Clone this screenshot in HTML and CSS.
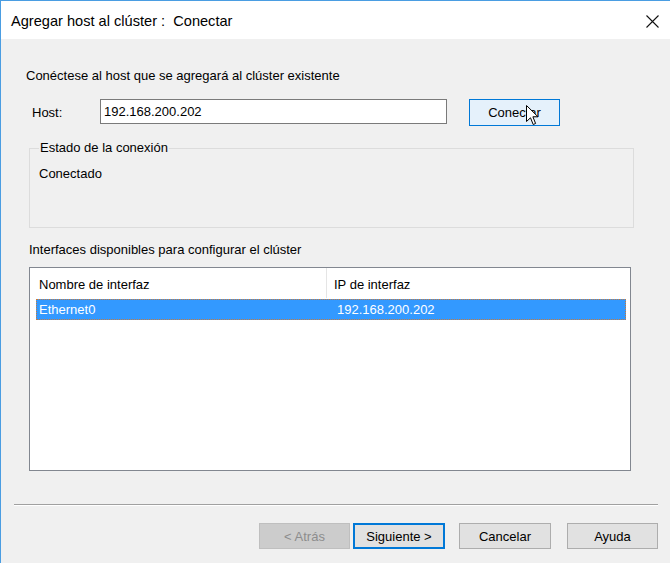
FILE: index.html
```html
<!DOCTYPE html>
<html lang="es">
<head>
    <meta charset="UTF-8">
    <title>Agregar host al clúster : Conectar</title>
    <link rel="stylesheet" href="styles.css">
</head>
<body>
    <div class="window">
        <div class="titlebar">
            <span class="title">Agregar host al clúster :&nbsp; Conectar</span>
            <svg class="close" width="13" height="13" viewBox="0 0 13 13">
                <path d="M0.5 0.5 L12.5 12.5 M12.5 0.5 L0.5 12.5" stroke="#111" stroke-width="1.1" fill="none"/>
            </svg>
        </div>

        <div class="content">
            <p class="intro">Conéctese al host que se agregará al clúster existente</p>

            <div class="host-row">
                <label for="host">Host:</label>
                <input type="text" id="host" value="192.168.200.202">
                <button type="button" class="btn btn-connect">Conectar
                    <!-- puntero del ratón encima del botón -->
                    <svg class="cursor" width="13" height="21" viewBox="0 0 13 21">
                        <path d="M0.5 0.5 L0.5 16.5 L4.5 12.8 L7.2 19.5 L9.6 18.5 L6.9 11.8 L12 11.8 Z" fill="#fff" stroke="#000" stroke-width="1" stroke-linejoin="miter"/>
                    </svg>
                </button>
            </div>

            <fieldset class="status">
                <legend>Estado de la conexión</legend>
                <div class="status-text">Conectado</div>
            </fieldset>

            <p class="list-label">Interfaces disponibles para configurar el clúster</p>

            <div class="listview">
                <div class="list-header">
                    <div class="col-name">Nombre de interfaz</div>
                    <div class="col-ip">IP de interfaz</div>
                </div>
                <div class="list-row selected">
                    <div class="col-name">Ethernet0</div>
                    <div class="col-ip">192.168.200.202</div>
                </div>
            </div>

            <div class="separator"></div>

            <div class="buttons">
                <button type="button" class="btn btn-back" disabled>&lt; Atrás</button>
                <button type="button" class="btn btn-next">Siguiente &gt;</button>
                <button type="button" class="btn btn-cancel">Cancelar</button>
                <button type="button" class="btn btn-help">Ayuda</button>
            </div>
        </div>
    </div>
</body>
</html>
```

FILE: styles.css
```css
* {
    margin: 0;
    padding: 0;
    box-sizing: border-box;
}

body {
    font-family: "Liberation Sans", Arial, sans-serif;
    font-size: 13px;
    line-height: 16px;
    color: #000;
    background: #f0f0f0;
    width: 670px;
    height: 563px;
    overflow: hidden;
}

.window {
    width: 670px;
    height: 563px;
    border-left: 1px solid #4a9de2;
    border-top: 1px solid #4a9de2;
    background: #f0f0f0;
}

.titlebar {
    height: 38px;
    background: #fff;
    display: flex;
    align-items: center;
    justify-content: space-between;
    padding: 2px 11px 0 10px;
}

.title {
    font-size: 14.6px;
    color: #000;
}

.close {
    display: block;
}

.content {
    padding: 29px 12px 0 28px;
}

.intro {
    margin-left: -3px;
}

.host-row {
    display: flex;
    align-items: flex-start;
    margin-top: 15px;
}

.host-row label {
    width: 68px;
    margin: 6px 0 0 3px;
}

.host-row input {
    width: 347px;
    height: 25px;
    border: 1px solid #7a7a7a;
    background: #fff;
    padding: 0 3px;
    font-family: "Liberation Sans", Arial, sans-serif;
    font-size: 13px;
    color: #000;
    outline: none;
}

.btn {
    height: 26px;
    font-family: "Liberation Sans", Arial, sans-serif;
    font-size: 13px;
    color: #000;
    background: #e1e1e1;
    border: 1px solid #adadad;
}

.btn-connect {
    position: relative;
    width: 91px;
    height: 27px;
    margin-left: 22px;
    background: #e5f1fb;
    border-color: #0078d7;
}

.cursor {
    position: absolute;
    left: 56px;
    top: 5px;
}

.status {
    width: 605px;
    margin-top: 14px;
    border: 1px solid #dcdcdc;
    padding: 0 9px;
    min-width: 0;
}

.status legend {
    padding: 0 1px;
    line-height: 16px;
}

.status-text {
    height: 71px;
    padding-top: 10px;
}

.list-label {
    margin-top: 14px;
}

.listview {
    width: 602px;
    height: 204px;
    margin-top: 9px;
    border: 1px solid #828790;
    background: #fff;
}

.list-header {
    display: flex;
    height: 30px;
}

.list-header .col-name {
    width: 297px;
    padding: 9px 0 0 9px;
    border-right: 1px solid #e5e5e5;
}

.list-header .col-ip {
    padding: 9px 0 0 7px;
}

.list-row {
    display: flex;
    height: 21px;
    width: 590px;
    margin: 1px 0 0 6px;
    align-items: center;
}

.list-row.selected {
    background: #3399ff;
    color: #fff;
    border: 1px dotted #c87a3c;
}

.list-row .col-name {
    width: 291px;
    padding-left: 2px;
}

.list-row .col-ip {
    padding-left: 9px;
}

.separator {
    width: 644px;
    margin: 33px 0 0 -15px;
    border-top: 1px solid #a0a0a0;
    border-bottom: 1px solid #fff;
}

.buttons {
    display: flex;
    justify-content: flex-end;
    margin-top: 17px;
}

.btn-back {
    width: 91px;
    background: #cccccc;
    border-color: #bfbfbf;
    color: #8d8d8d;
}

.btn-next {
    width: 92px;
    margin-left: 3px;
    border: 2px solid #0078d7;
}

.btn-cancel {
    width: 92px;
    margin-left: 14px;
}

.btn-help {
    width: 91px;
    margin-left: 16px;
}
```
